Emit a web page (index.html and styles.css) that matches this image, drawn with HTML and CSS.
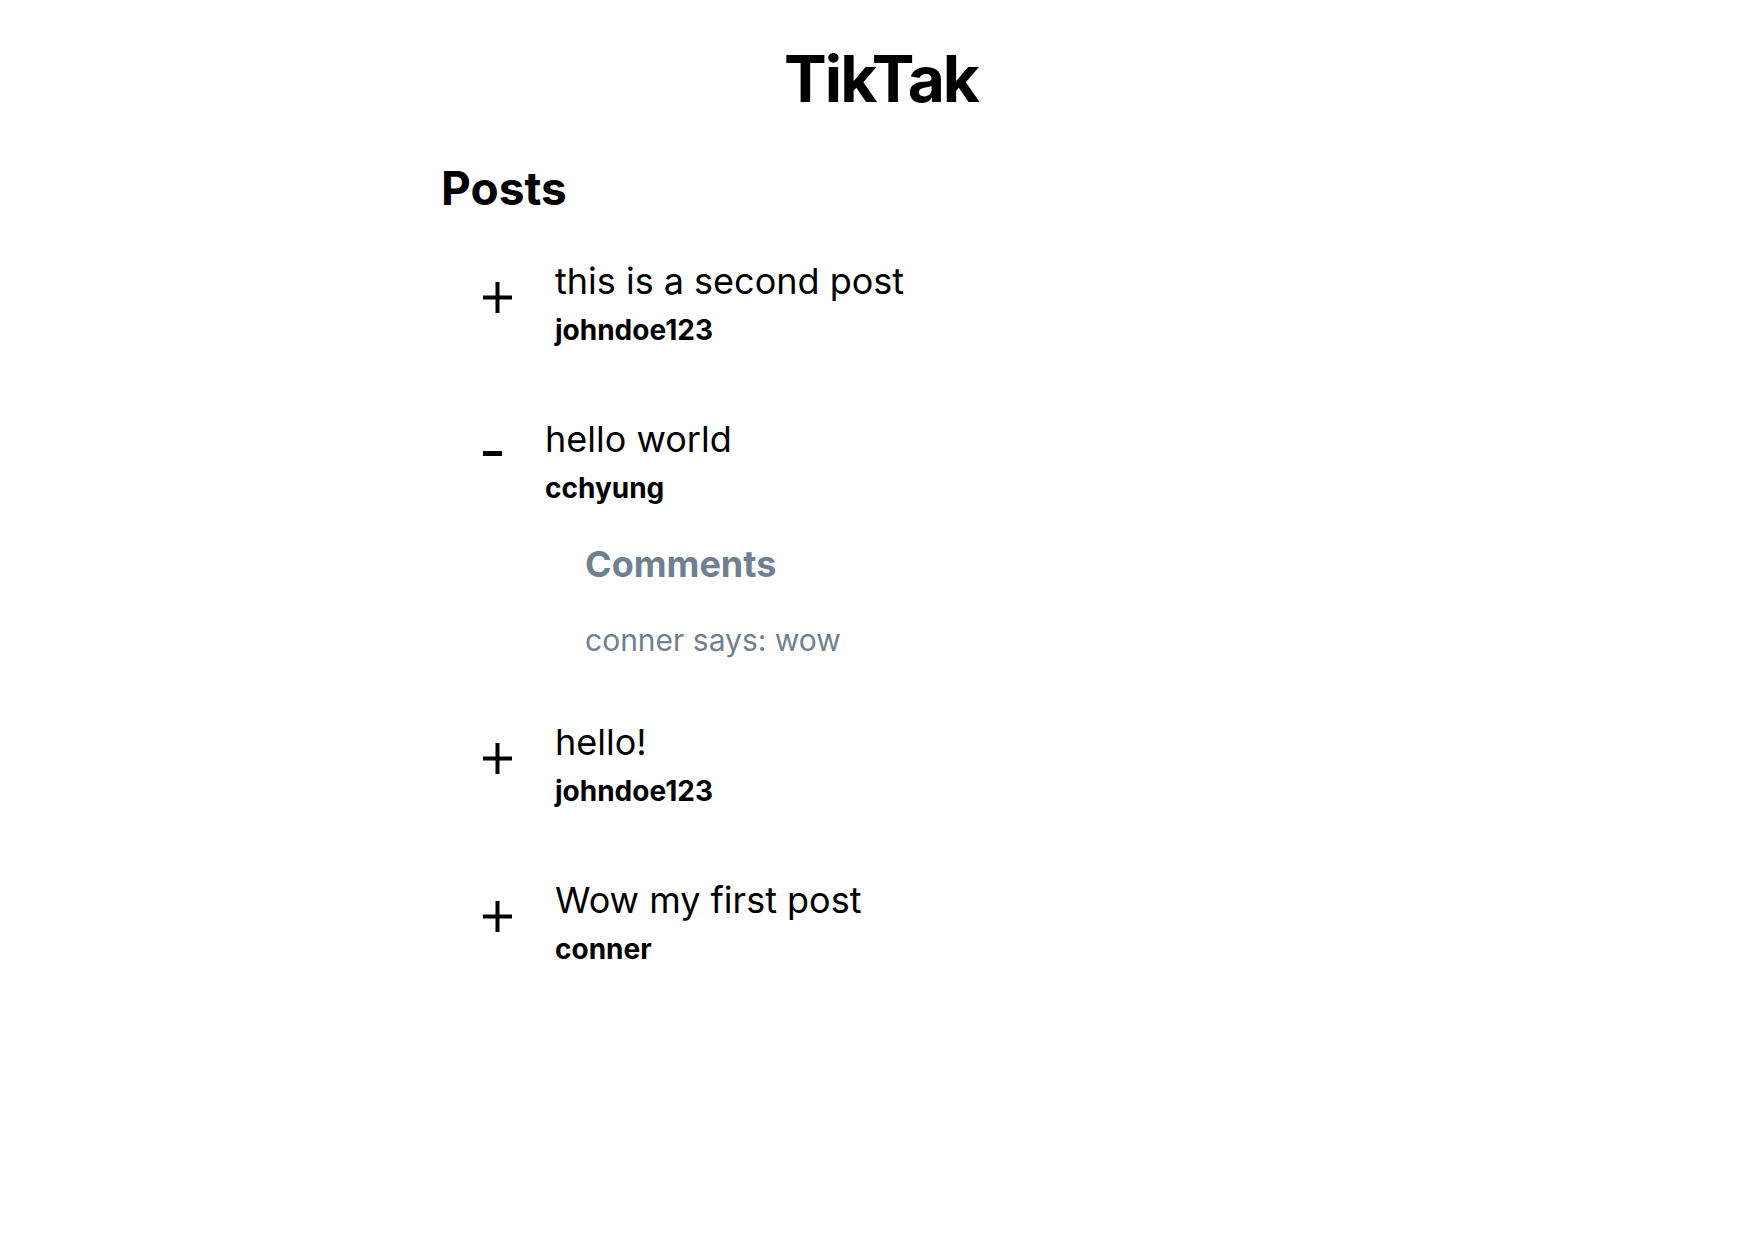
FILE: index.html
```html
<!DOCTYPE html>
<html lang="en">
<head>
<meta charset="utf-8">
<title>TikTak</title>
<link rel="stylesheet" href="styles.css">
</head>
<body>
<div class="app">
  <h1 class="app-title">TikTak</h1>
  <main class="feed">
    <h2 class="feed-title">Posts</h2>
    <ul class="post-list">
      <li class="post">
        <div class="post-row">
          <button class="toggle" aria-label="Expand">
            <svg class="icon-plus" width="29" height="60" viewBox="0 0 29 60"><rect x="0" y="34.5" width="29" height="4"/><rect x="12.5" y="21" width="4" height="31"/></svg>
          </button>
          <div class="post-body">
            <p class="post-text">this is a second post</p>
            <p class="post-author">johndoe123</p>
          </div>
        </div>
      </li>
      <li class="post post-expanded">
        <div class="post-row">
          <button class="toggle" aria-label="Collapse">
            <svg class="icon-minus" width="19" height="60" viewBox="0 0 19 60"><rect x="0" y="32" width="19" height="5"/></svg>
          </button>
          <div class="post-body">
            <p class="post-text">hello world</p>
            <p class="post-author">cchyung</p>
            <section class="comments">
              <h3 class="comments-title">Comments</h3>
              <p class="comment">conner says: wow</p>
            </section>
          </div>
        </div>
      </li>
      <li class="post">
        <div class="post-row">
          <button class="toggle" aria-label="Expand">
            <svg class="icon-plus" width="29" height="60" viewBox="0 0 29 60"><rect x="0" y="34.5" width="29" height="4"/><rect x="12.5" y="21" width="4" height="31"/></svg>
          </button>
          <div class="post-body">
            <p class="post-text">hello!</p>
            <p class="post-author">johndoe123</p>
          </div>
        </div>
      </li>
      <li class="post">
        <div class="post-row">
          <button class="toggle" aria-label="Expand">
            <svg class="icon-plus" width="29" height="60" viewBox="0 0 29 60"><rect x="0" y="34.5" width="29" height="4"/><rect x="12.5" y="21" width="4" height="31"/></svg>
          </button>
          <div class="post-body">
            <p class="post-text">Wow my first post</p>
            <p class="post-author">conner</p>
          </div>
        </div>
      </li>
    </ul>
  </main>
</div>
</body>
</html>
```

FILE: styles.css
```css
* {
  box-sizing: border-box;
}

html, body {
  margin: 0;
  padding: 0;
  background: #ffffff;
}

body {
  font-family: Inter, "Noto Sans", "Liberation Sans", sans-serif;
  color: #000000;
}

.app {
  padding-top: 40px;
}

.app-title {
  margin: 0;
  font-size: 64px;
  line-height: 78px;
  font-weight: 700;
  text-align: center;
  letter-spacing: -2px;
}

.feed {
  width: 880px;
  margin: 48px auto 0;
}

.feed-title {
  margin: 0;
  font-size: 46px;
  line-height: 44px;
  font-weight: 700;
}

.post-list {
  list-style: none;
  margin: 51px 0 0;
  padding: 0 0 0 42px;
}

.post + .post {
  margin-top: 74px;
}

.post-expanded + .post {
  margin-top: 66px;
}

.post-row {
  display: flex;
  align-items: flex-start;
  gap: 43px;
}

.toggle {
  border: 0;
  background: none;
  padding: 0;
  margin: 0;
  display: flex;
  cursor: pointer;
}

.toggle svg {
  display: block;
  fill: #000000;
}

.post-body {
  display: flex;
  flex-direction: column;
}

.post-text {
  margin: 0;
  font-size: 36px;
  line-height: 40px;
  font-weight: 400;
}

.post-author {
  margin: 14px 0 0;
  font-size: 28px;
  line-height: 30px;
  font-weight: 700;
}

.comments {
  padding-left: 40px;
  margin-top: 43px;
  color: #708090;
}

.comments-title {
  margin: 0;
  font-size: 36px;
  line-height: 36px;
  font-weight: 700;
}

.comment {
  margin: 42px 0 0;
  font-size: 30px;
  line-height: 32px;
}
```
